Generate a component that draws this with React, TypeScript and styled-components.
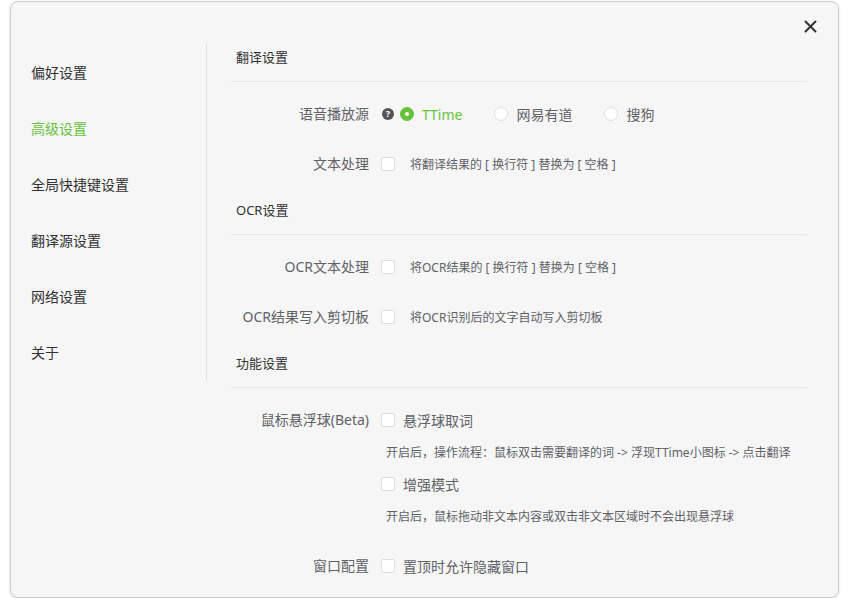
import React from "react";
import styled, {createGlobalStyle} from "styled-components";

const GlobalStyle = createGlobalStyle`
  body {
    margin: 0;
    background: #ffffff;
    font-family: "Noto Sans", "Noto Sans CJK SC", sans-serif;
  }
`;

const green = "#67c23a";

const menu = ["偏好设置", "高级设置", "全局快捷键设置", "翻译源设置", "网络设置", "关于"];

const Radio: React.FC<{checked?: boolean; children: React.ReactNode}> = ({checked = false, children}) => (
  <RadioItem>
    <RadioCircle $checked={checked}/>
    <RadioText $checked={checked}>{children}</RadioText>
  </RadioItem>
);

const Check: React.FC<{children: React.ReactNode; small?: boolean}> = ({children, small = false}) => (
  <CheckItem>
    <CheckBox/>
    <CheckText $small={small}>{children}</CheckText>
  </CheckItem>
);

const App: React.FC = () => {
  return (
    <>
      <GlobalStyle/>
      <Card>
        <Close aria-label="close">
          <svg width="13" height="13" viewBox="0 0 13 13">
            <path d="M1.5 1.5 L11.5 11.5 M11.5 1.5 L1.5 11.5" stroke="#333" strokeWidth="2" strokeLinecap="round"/>
          </svg>
        </Close>
        <Sidebar>
          {menu.map((m, i) => (
            <MenuItem key={m} $active={i === 1}>{m}</MenuItem>
          ))}
        </Sidebar>
        <Main>
          <Section>
            <SectionTitle>翻译设置</SectionTitle>
            <Rows>
              <FormItem>
                <Label>语音播放源</Label>
                <Field>
                  <Line>
                    <Help>?</Help>
                    <Radio checked>TTime</Radio>
                    <Radio>网易有道</Radio>
                    <Radio>搜狗</Radio>
                  </Line>
                </Field>
              </FormItem>
              <FormItem>
                <Label>文本处理</Label>
                <Field>
                  <Line>
                    <Check small>将翻译结果的 [ 换行符 ] 替换为 [ 空格 ]</Check>
                  </Line>
                </Field>
              </FormItem>
            </Rows>
          </Section>
          <Section>
            <SectionTitle>OCR设置</SectionTitle>
            <Rows>
              <FormItem>
                <Label>OCR文本处理</Label>
                <Field>
                  <Line>
                    <Check small>将OCR结果的 [ 换行符 ] 替换为 [ 空格 ]</Check>
                  </Line>
                </Field>
              </FormItem>
              <FormItem>
                <Label>OCR结果写入剪切板</Label>
                <Field>
                  <Line>
                    <Check small>将OCR识别后的文字自动写入剪切板</Check>
                  </Line>
                </Field>
              </FormItem>
            </Rows>
          </Section>
          <Section>
            <SectionTitle>功能设置</SectionTitle>
            <Rows>
              <FormItem>
                <Label>鼠标悬浮球(Beta)</Label>
                <Field>
                  <Line><Check>悬浮球取词</Check></Line>
                  <Line><Tip>开启后，操作流程：鼠标双击需要翻译的词 -&gt; 浮现TTime小图标 -&gt; 点击翻译</Tip></Line>
                  <Line><Check>增强模式</Check></Line>
                  <Line><Tip>开启后，鼠标拖动非文本内容或双击非文本区域时不会出现悬浮球</Tip></Line>
                </Field>
              </FormItem>
              <FormItem>
                <Label>窗口配置</Label>
                <Field>
                  <Line><Check>置顶时允许隐藏窗口</Check></Line>
                </Field>
              </FormItem>
            </Rows>
          </Section>
        </Main>
      </Card>
    </>
  );
};

const Card = styled.div`
  position: relative;
  box-sizing: border-box;
  margin: 1px 0 0 10px;
  width: 829px;
  height: 597px;
  padding: 43px 31px 0 0;
  display: flex;
  align-items: flex-start;
  background: #f6f6f6;
  border: 1px solid #cdcdcd;
  border-radius: 8px;
  box-shadow: 0 1px 3px rgba(0, 0, 0, 0.12);
  overflow: hidden;
`;

const Close = styled.div`
  position: absolute;
  top: 18px;
  right: 21px;
  width: 13px;
  height: 13px;
  display: flex;
`;

const Sidebar = styled.div`
  box-sizing: border-box;
  width: 196px;
  flex-shrink: 0;
  margin-top: -1px;
  border-right: 1px solid #dcdfe6;
  padding-left: 20px;
`;

const MenuItem = styled.div<{$active: boolean}>`
  height: 56px;
  line-height: 56px;
  font-size: 14px;
  color: ${({$active}) => ($active ? green : "#303133")};
  font-family: "Noto Sans CJK SC", sans-serif;
`;

const Main = styled.div`
  flex: 1;
  padding-left: 24px;
  display: flex;
  flex-direction: column;
`;

const Section = styled.div`
  & + & {
    margin-top: 9px;
  }
`;

const SectionTitle = styled.div`
  padding: 0 0 12px 5px;
  line-height: 24px;
  font-size: 13px;
  color: #303133;
  border-bottom: 1px solid #e4e7ed;
`;

const Rows = styled.div`
  padding-top: 7px;
`;

const FormItem = styled.div`
  display: flex;
  padding: 9px 0;
`;

const Label = styled.div`
  box-sizing: border-box;
  width: 150px;
  flex-shrink: 0;
  padding-right: 12px;
  text-align: right;
  line-height: 32px;
  font-size: 14px;
  color: #606266;
  white-space: nowrap;
`;

const Field = styled.div`
  display: flex;
  flex-direction: column;
`;

const Line = styled.div`
  height: 32px;
  display: flex;
  align-items: center;
`;

const Help = styled.span`
  width: 12px;
  height: 12px;
  border-radius: 50%;
  background: #555558;
  color: #ffffff;
  font-size: 9px;
  font-weight: 700;
  line-height: 12px;
  text-align: center;
  margin: 0 6px 0 1px;
`;

const RadioItem = styled.span`
  display: flex;
  align-items: center;
  gap: 8px;
  margin-right: 32px;
`;

const RadioCircle = styled.span<{$checked: boolean}>`
  box-sizing: border-box;
  width: 14px;
  height: 14px;
  border-radius: 50%;
  background: ${({$checked}) => ($checked ? green : "#ffffff")};
  border: 1px solid ${({$checked}) => ($checked ? green : "#dcdfe6")};
  display: flex;
  align-items: center;
  justify-content: center;
  &::after {
    content: "";
    width: 4px;
    height: 4px;
    border-radius: 50%;
    background: #ffffff;
    display: ${({$checked}) => ($checked ? "block" : "none")};
  }
`;

const RadioText = styled.span<{$checked: boolean}>`
  font-size: 14px;
  color: ${({$checked}) => ($checked ? green : "#606266")};
`;

const CheckItem = styled.span`
  display: flex;
  align-items: center;
`;

const CheckBox = styled.span`
  box-sizing: border-box;
  width: 14px;
  height: 14px;
  background: #ffffff;
  border: 1px solid #dcdfe6;
  border-radius: 2px;
`;

const CheckText = styled.span<{$small: boolean}>`
  margin-left: ${({$small}) => ($small ? "15px" : "8px")};
  font-size: ${({$small}) => ($small ? "12px" : "14px")};
  color: #606266;
`;

const Tip = styled.span`
  padding-left: 5px;
  font-size: 12px;
  color: #606266;
  white-space: nowrap;
`;

export default App;
